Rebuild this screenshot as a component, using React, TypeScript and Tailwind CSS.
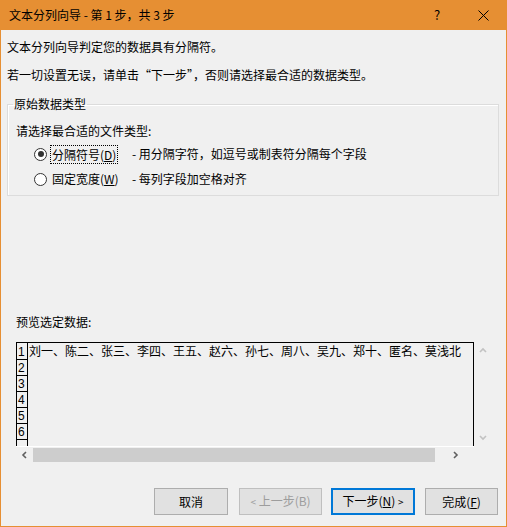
import React from 'react'

const rows = ['刘一、陈二、张三、李四、王五、赵六、孙七、周八、吴九、郑十、匿名、莫浅北', '', '', '', '', '', '']

function Chevron({ dir, color }: { dir: 'up' | 'down' | 'left' | 'right'; color: string }) {
  const pts = {
    up: '1,5 4,2 7,5',
    down: '1,2 4,5 7,2',
    left: '5,1 2,4 5,7',
    right: '3,1 6,4 3,7',
  }[dir]
  return (
    <svg width="8" height="8" viewBox="0 0 8 8">
      <polyline points={pts} fill="none" stroke={color} strokeWidth="1.6" />
    </svg>
  )
}

function Radio({ checked }: { checked?: boolean }) {
  return (
    <div className="w-[13px] h-[13px] rounded-full border border-[#333333] bg-white flex items-center justify-center">
      {checked && <div className="w-[6px] h-[6px] rounded-full bg-[#333333]" />}
    </div>
  )
}

export default function App() {
  return (
    <div className="w-[507px] h-[527px] flex flex-col bg-[#f0f0f0] border-x border-b border-[#e68f33] text-[12px] leading-[16px] text-black font-['Noto_Sans_CJK_SC',sans-serif]">
      {/* Title bar */}
      <div className="h-[30px] shrink-0 flex items-center bg-[#e68f33] pl-[8px]">
        <span>文本分列向导 - 第 1 步，共 3 步</span>
        <span className="ml-auto w-[46px] text-center text-[13px]">?</span>
        <div className="w-[46px] flex items-center justify-center">
          <svg width="11" height="11" viewBox="0 0 11 11">
            <path d="M0.5 0.5 L10.5 10.5 M10.5 0.5 L0.5 10.5" stroke="#000" strokeWidth="1" />
          </svg>
        </div>
      </div>

      {/* Body */}
      <div className="flex-1 flex flex-col px-[6px]">
        <p className="pt-[9px]">文本分列向导判定您的数据具有分隔符。</p>
        <p className="mt-[12px]">若一切设置无误，请单击“下一步”，否则请选择最合适的数据类型。</p>

        <fieldset className="mt-[13px] w-[492px] border border-[#dcdcdc] shadow-[inset_1px_1px_0_#ffffff]">
          <legend className="ml-[5px] px-[1px] leading-[16px]">原始数据类型</legend>
          <div className="pl-[8px] pb-[6px]">
            <p className="mt-[11px]">请选择最合适的文件类型:</p>
            <div className="mt-[5px] h-[20px] flex items-center pl-[18px]">
              <Radio checked />
              <div className="ml-[3px] w-[82px]">
                <span className="inline-block border border-dotted border-black px-[1px] leading-[17px]">
                  分隔符号(<span className="underline">D</span>)
                </span>
              </div>
              <span>- 用分隔字符，如逗号或制表符分隔每个字段</span>
            </div>
            <div className="mt-[5px] h-[20px] flex items-center pl-[18px]">
              <Radio />
              <div className="ml-[4px] w-[81px]">
                <span className="px-[1px]">
                  固定宽度(<span className="underline">W</span>)
                </span>
              </div>
              <span>- 每列字段加空格对齐</span>
            </div>
          </div>
        </fieldset>

        <p className="mt-[118px] pl-[9px]">预览选定数据:</p>

        {/* Preview */}
        <div className="ml-[9px] mt-[12px] w-[475px] flex flex-col">
          <div className="flex h-[104px]">
            <div className="w-[458px] border-l border-t border-r border-black overflow-hidden">
              {rows.map((text, i) => (
                <div key={i} className={`flex ${i === 0 ? 'h-[17px]' : 'h-[16px]'}`}>
                  <div className="w-[11px] shrink-0 border-r border-b border-black flex items-end pl-[1px] text-[12px] leading-[14px] font-['Liberation_Sans',sans-serif]">
                    {i < 6 ? i + 1 : ''}
                  </div>
                  <div className="pl-[1px] whitespace-nowrap leading-[16px]">{text}</div>
                </div>
              ))}
            </div>
            <div className="w-[17px] flex flex-col justify-between">
              <div className="h-[17px] flex items-center justify-center">
                <Chevron dir="up" color="#c2c2c2" />
              </div>
              <div className="h-[17px] flex items-center justify-center">
                <Chevron dir="down" color="#c2c2c2" />
              </div>
            </div>
          </div>
          <div className="flex h-[17px]">
            <div className="w-[458px] flex items-center border-t border-white">
              <div className="w-[17px] h-full flex items-center justify-center">
                <Chevron dir="left" color="#606060" />
              </div>
              <div className="w-[402px] h-[14px] bg-[#cdcdcd]" />
              <div className="flex-1 h-full flex items-center justify-center">
                <Chevron dir="right" color="#606060" />
              </div>
            </div>
            <div className="w-[17px]" />
          </div>
        </div>

        {/* Buttons */}
        <div className="mt-[25px] flex justify-end pr-[2px]">
          <button className="w-[74px] h-[27px] border border-[#adadad] bg-[#e1e1e1]">取消</button>
          <button className="ml-[11px] w-[83px] h-[27px] border border-[#bfbfbf] bg-[#e1e1e1] text-[#9d9d9d]">
            <span className="text-[10px]">&lt;</span> 上一步(B)
          </button>
          <button className="ml-[9px] w-[84px] h-[27px] border-2 border-[#0078d7] bg-[#e1e1e1]">
            下一步(<span className="underline">N</span>) <span className="text-[10px]">&gt;</span>
          </button>
          <button className="ml-[10px] w-[73px] h-[27px] border border-[#adadad] bg-[#e1e1e1]">
            完成(<span className="underline">F</span>)
          </button>
        </div>
      </div>
    </div>
  )
}
